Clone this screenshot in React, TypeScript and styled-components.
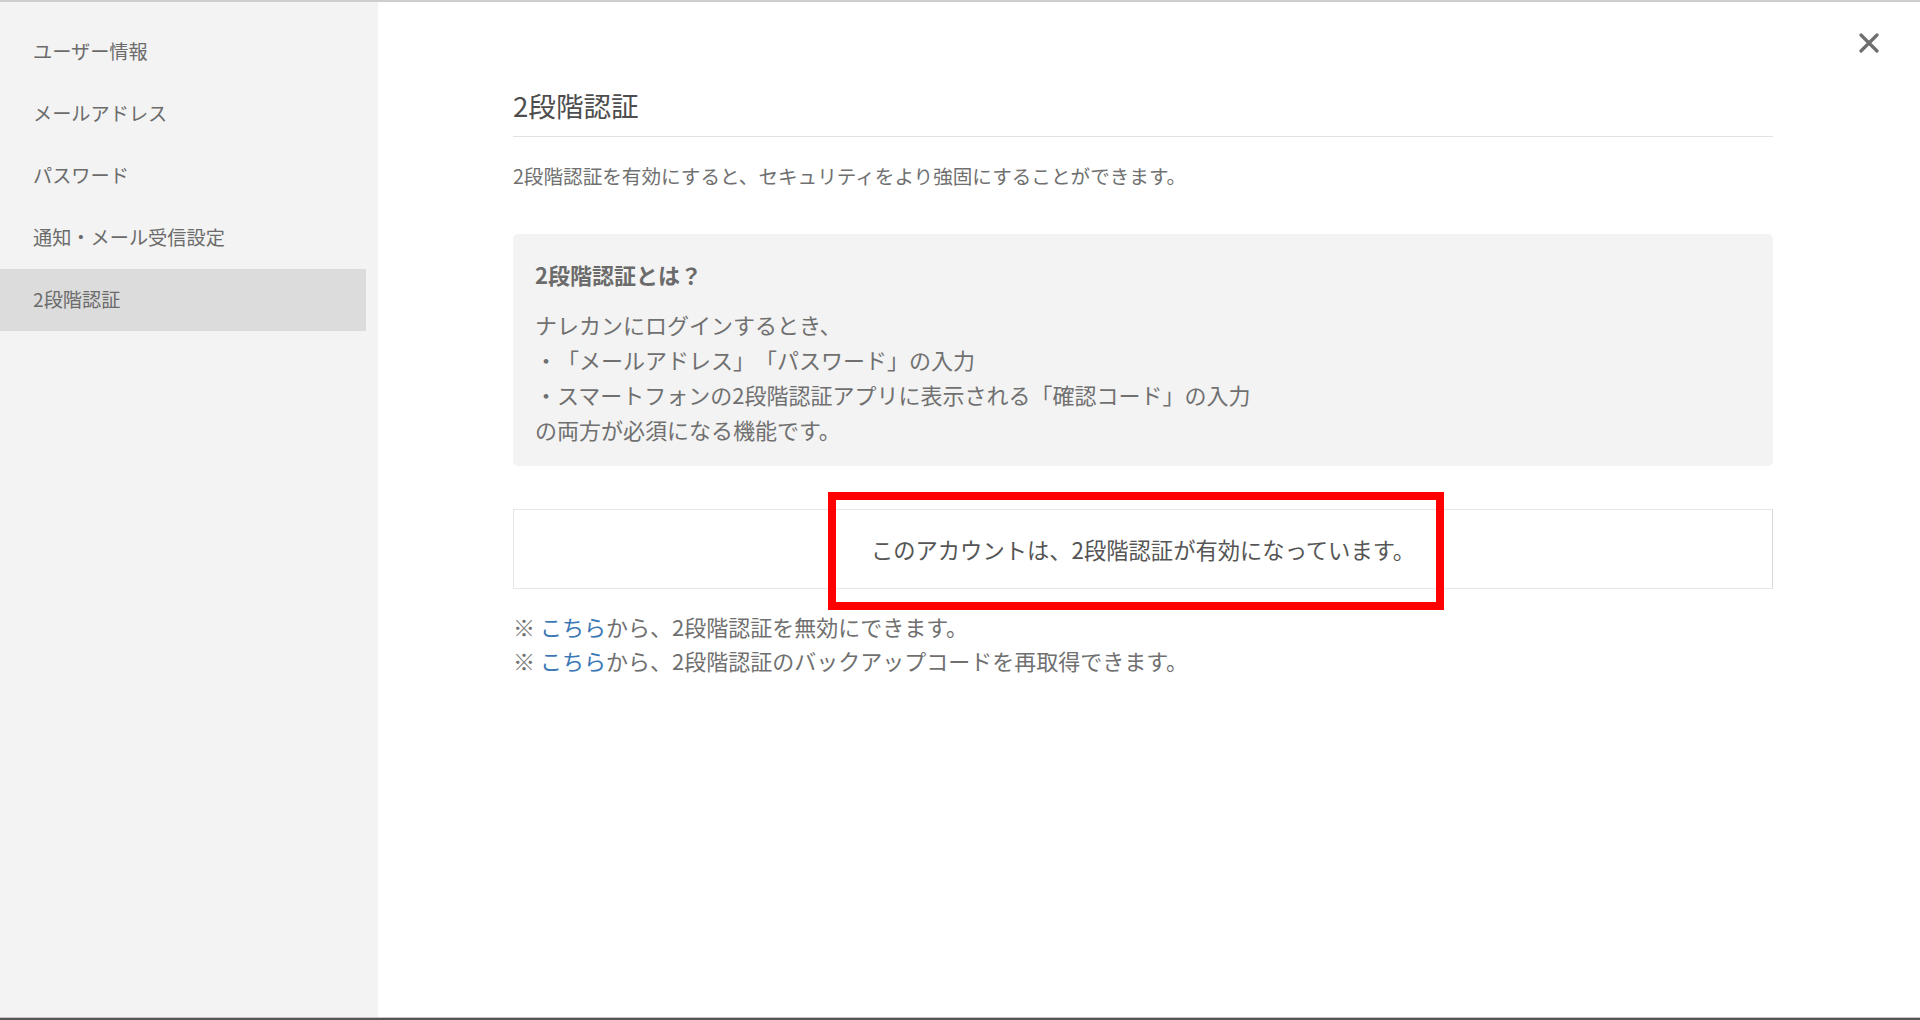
import styled, { createGlobalStyle } from 'styled-components';

const GlobalStyle = createGlobalStyle`
  html, body {
    margin: 0;
    padding: 0;
    background: #fff;
  }

  body {
    font-family: "Noto Sans CJK JP", "Noto Sans", sans-serif;
    color: #6b6b6b;
    text-spacing-trim: space-all;
  }

  * {
    box-sizing: border-box;
  }
`;

const Frame = styled.div`
  width: 1920px;
  height: 1020px;
  display: flex;
  flex-direction: column;
  border-top: 2px solid #cdcdcd;
  border-bottom: 2px solid #555;
`;

const Layout = styled.div`
  flex: 1;
  display: flex;
  border-bottom: 1px solid #c4c4c4;
`;

const Sidebar = styled.aside`
  width: 378px;
  flex-shrink: 0;
  background-color: #f3f3f3;
  padding-top: 19px;
`;

const Nav = styled.nav`
  width: 366px;
  display: flex;
  flex-direction: column;
`;

const NavItem = styled.a<{ $active?: boolean }>`
  display: flex;
  align-items: center;
  height: 62px;
  padding-left: 33px;
  padding-bottom: 2px;
  font-size: 19.2px;
  color: #6b6b6b;
  text-decoration: none;
  background-color: ${({ $active }) => ($active ? '#dcdcdc' : 'transparent')};
  cursor: pointer;
`;

const Main = styled.main`
  position: relative;
  flex: 1;
  padding: 83px 0 0 135px;
`;

const CloseButton = styled.button`
  position: absolute;
  top: 29px;
  right: 39px;
  width: 24px;
  height: 24px;
  padding: 2px;
  border: none;
  background: transparent;
  cursor: pointer;
  color: #6e6e6e;
`;

const Content = styled.div`
  width: 1260px;
`;

const Heading = styled.h2`
  margin: 0;
  padding-bottom: 10px;
  border-bottom: 1px solid #e2e2e2;
  font-size: 27.6px;
  font-weight: 400;
  line-height: 41px;
  color: #4d4d4d;
`;

const Lead = styled.p`
  margin: 22px 0 0;
  font-size: 19.6px;
  line-height: 34.5px;
  color: #707070;
`;

const InfoBox = styled.section`
  margin-top: 40px;
  padding: 23px 22px 19px;
  background-color: #f3f3f3;
  border-radius: 5px;
`;

const InfoTitle = styled.h3`
  margin: 0 0 15px;
  font-size: 22px;
  font-weight: 600;
  line-height: 35px;
  color: #6b6b6b;
`;

const InfoText = styled.p`
  margin: 0;
  font-size: 22px;
  line-height: 35px;
  color: #707070;
`;

const StatusBox = styled.div`
  position: relative;
  margin-top: 43px;
  height: 80px;
  display: flex;
  align-items: center;
  justify-content: center;
  border: 1px solid #e6e6e6;
  border-right-color: #dadada;
  font-size: 22.3px;
  color: #555;
`;

const Highlight = styled.div`
  position: absolute;
  left: 314px;
  top: -18px;
  width: 616px;
  height: 118px;
  border: 8px solid #ff0000;
  pointer-events: none;
`;

const Notes = styled.div`
  margin-top: 20px;
  display: flex;
  flex-direction: column;
`;

const Note = styled.p`
  margin: 0;
  font-size: 22px;
  line-height: 34px;
  color: #707070;
`;

const Link = styled.a`
  color: #3b78b5;
  text-decoration: none;
  cursor: pointer;
`;

const menu = ['ユーザー情報', 'メールアドレス', 'パスワード', '通知・メール受信設定', '2段階認証'];

export default function App() {
  return (
    <>
      <GlobalStyle />
      <Frame>
        <Layout>
          <Sidebar>
            <Nav>
              {menu.map((label) => (
                <NavItem key={label} $active={label === '2段階認証'}>
                  {label}
                </NavItem>
              ))}
            </Nav>
          </Sidebar>
          <Main>
            <CloseButton aria-label="閉じる">
              <svg width="20" height="20" viewBox="0 0 20 20">
                <path
                  d="M2 2L18 18M18 2L2 18"
                  stroke="currentColor"
                  strokeWidth="3.2"
                  strokeLinecap="round"
                />
              </svg>
            </CloseButton>
            <Content>
              <Heading>2段階認証</Heading>
              <Lead>2段階認証を有効にすると、セキュリティをより強固にすることができます。</Lead>
              <InfoBox>
                <InfoTitle>2段階認証とは？</InfoTitle>
                <InfoText>
                  ナレカンにログインするとき、
                  <br />
                  ・「メールアドレス」「パスワード」の入力
                  <br />
                  ・スマートフォンの2段階認証アプリに表示される「確認コード」の入力
                  <br />
                  の両方が必須になる機能です。
                </InfoText>
              </InfoBox>
              <StatusBox>
                このアカウントは、2段階認証が有効になっています。
                <Highlight />
              </StatusBox>
              <Notes>
                <Note>
                  ※ <Link>こちら</Link>から、2段階認証を無効にできます。
                </Note>
                <Note>
                  ※ <Link>こちら</Link>から、2段階認証のバックアップコードを再取得できます。
                </Note>
              </Notes>
            </Content>
          </Main>
        </Layout>
      </Frame>
    </>
  );
}
